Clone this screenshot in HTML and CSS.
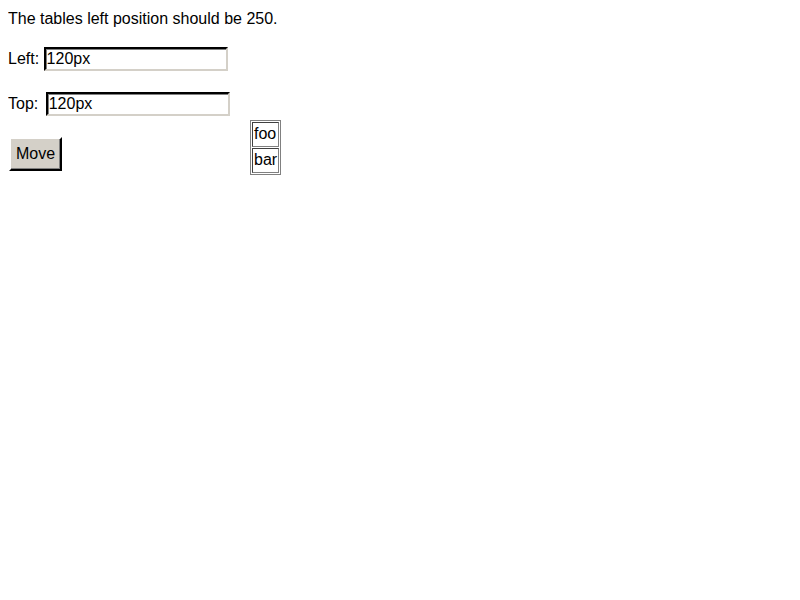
FILE: index.html
```html
<!DOCTYPE html>
<html>
<head>
<meta charset="utf-8">
<link rel="stylesheet" href="styles.css">
</head>
<body>
<div class="intro">The tables left position should be 250.</div>
<p class="row">Left: <input class="field" type="text" value="120px"></p>
<p class="row">Top: <input class="field field-top" type="text" value="120px"></p>
<button class="btn" type="button">Move</button>
<table class="target">
  <tr><td class="cell">foo</td></tr>
  <tr><td class="cell">bar</td></tr>
</table>
</body>
</html>
```

FILE: styles.css
```css
html, body {
  background: #ffffff;
}
body {
  margin: 8px;
  font-family: "Liberation Sans", Arial, sans-serif;
  font-size: 16px;
  color: #000000;
}
.intro {
  line-height: 21px;
  margin: 0 0 18px 0;
}
.row {
  margin: 0 0 21px 0;
  line-height: 24px;
  height: 24px;
}
.field {
  box-sizing: border-box;
  width: 184px;
  height: 24px;
  padding: 0 1px;
  margin: 0;
  font-family: "Liberation Sans", Arial, sans-serif;
  font-size: 16px;
  color: #000000;
  background: #ffffff;
  border-style: solid;
  border-width: 2px;
  border-color: #000000 #d4d0c8 #d4d0c8 #000000;
  box-shadow: inset 1px 1px 0 #808080;
  outline: none;
  vertical-align: top;
}
.field-top {
  margin-left: 3px;
}
.btn {
  box-sizing: border-box;
  height: 34px;
  width: 53px;
  margin: 0 0 0 1px;
  padding: 0;
  font-family: "Liberation Sans", Arial, sans-serif;
  font-size: 16px;
  color: #000000;
  background: #d4d0c8;
  border-style: solid;
  border-width: 2px;
  border-color: #ffffff #000000 #000000 #ffffff;
  box-shadow: inset -1px -1px 0 #808080;
}
.target {
  position: absolute;
  left: 250px;
  top: 120px;
  border: 1px solid #808080;
  border-spacing: 1px;
  padding: 0;
}
.cell {
  border: 1px solid #808080;
  border-top-color: #404040;
  border-left-color: #404040;
  padding: 1px 1px 2px 1px;
  line-height: 20px;
  font-size: 16px;
}
```
